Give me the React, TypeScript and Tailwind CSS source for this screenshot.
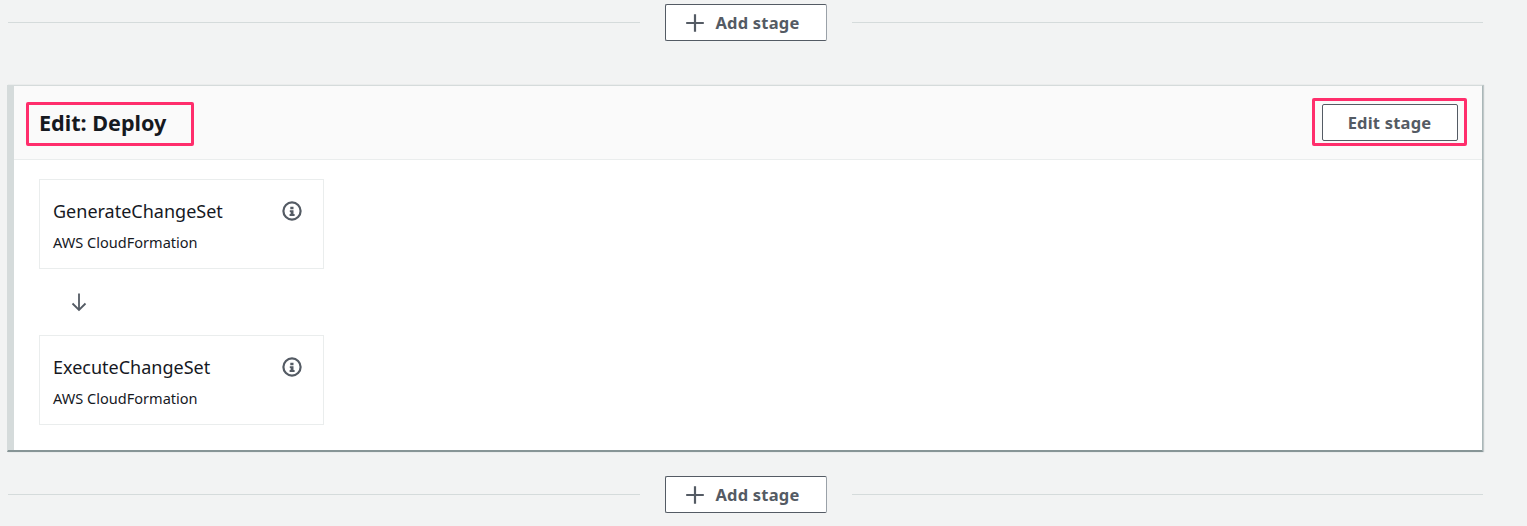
import React from "react";

const Plus = () => (
  <svg width="20" height="20" viewBox="0 0 20 20" fill="none" stroke="#545b64" strokeWidth="2.2" className="shrink-0 mt-[-2px]">
    <path d="M10 1.2v17.6M1.200 10h17.600" />
  </svg>
);

const Info = () => (
  <svg width="20" height="20" viewBox="0 0 20 20" fill="none" className="shrink-0">
    <circle cx="10" cy="10" r="8.6" stroke="#545b64" strokeWidth="2.2" />
    <path d="M8.300 5.800h3.200v2.400H8.300zM7.800 9.200h3.700v3.900h1.100v1.800H7.600v-1.800h1v-2.100h-.8z" fill="#545b64" />
  </svg>
);

const ArrowDown = () => (
  <svg width="18" height="20" viewBox="0 0 18 20" fill="none" stroke="#545b64" strokeWidth="1.8">
    <path d="M9 1.500v16M2.500 11.500 9 18l6.500-6.500" />
  </svg>
);

function AddStage() {
  return (
    <div className="flex items-center h-[37px] pl-[8px] pr-[44px]">
      <div className="flex-1 h-px bg-[#d5dbdb]" />
      <button className="mx-[25px] flex items-center justify-center gap-[11px] w-[162px] h-[37px] pr-[7px] pt-[2px] bg-white border border-[#545b64] border-r-[#9aa1a8] rounded-[2px] text-[#545b64] font-bold text-[16.500px] tracking-[0.2px]">
        <Plus />
        <span>Add stage</span>
      </button>
      <div className="flex-1 h-px bg-[#d5dbdb]" />
    </div>
  );
}

function Tile({ name }: { name: string }) {
  return (
    <div className="w-[285px] h-[90px] border border-[#eaeded] bg-white pl-[13px] pr-[21px] pt-[19px]">
      <div className="flex items-center justify-between h-[24px]">
        <span className="text-[18px] text-[#16191f] leading-[24px]">{name}</span>
        <Info />
      </div>
      <div className="text-[14.550px] text-[#16191f] leading-[20px] mt-[9px]">AWS CloudFormation</div>
    </div>
  );
}

export default function App() {
  return (
    <div
      className="w-[1527px] h-[526px] overflow-hidden bg-[#f2f3f3] pt-[4px]"
      style={{ fontFamily: '"Noto Sans", "Open Sans", sans-serif' }}
    >
      <AddStage />
      <div className="mt-[44px] ml-[7px] w-[1476px] h-[367px] flex bg-white border border-[#d5dbdb] border-r-[#aab7b8] border-b-2 border-b-[#879596] shadow-[1px_0_1px_rgba(0,28,36,0.2)]">
        <div className="w-[6px] shrink-0 bg-[#d5dbdb]" />
        <div className="flex-1 min-w-0">
          <div className="h-[74px] bg-[#fafafa] border-b border-[#eaeded] flex items-center justify-between pl-[12px] pr-[15px]">
            <div className="w-[168px] h-[44px] border-[3px] border-[#ff2e6c] rounded-[2px] flex items-center pl-[10px] mt-[2px]">
              <span className="text-[21.600px] font-bold text-[#16191f]">Edit: Deploy</span>
            </div>
            <div className="w-[155px] h-[48px] border-[3px] border-[#ff2e6c] rounded-[2px] flex items-center justify-center mt-[-1px]">
              <button className="w-[136px] h-[37px] pt-[2px] bg-white border border-[#545b64] rounded-[2px] text-[#545b64] font-bold text-[16.500px] tracking-[0.2px]">
                Edit stage
              </button>
            </div>
          </div>
          <div className="pl-[25px] pt-[19px]">
            <Tile name="GenerateChangeSet" />
            <div className="h-[66px] pl-[31px] flex items-center">
              <ArrowDown />
            </div>
            <Tile name="ExecuteChangeSet" />
          </div>
        </div>
      </div>
      <div className="mt-[24px]">
        <AddStage />
      </div>
    </div>
  );
}
